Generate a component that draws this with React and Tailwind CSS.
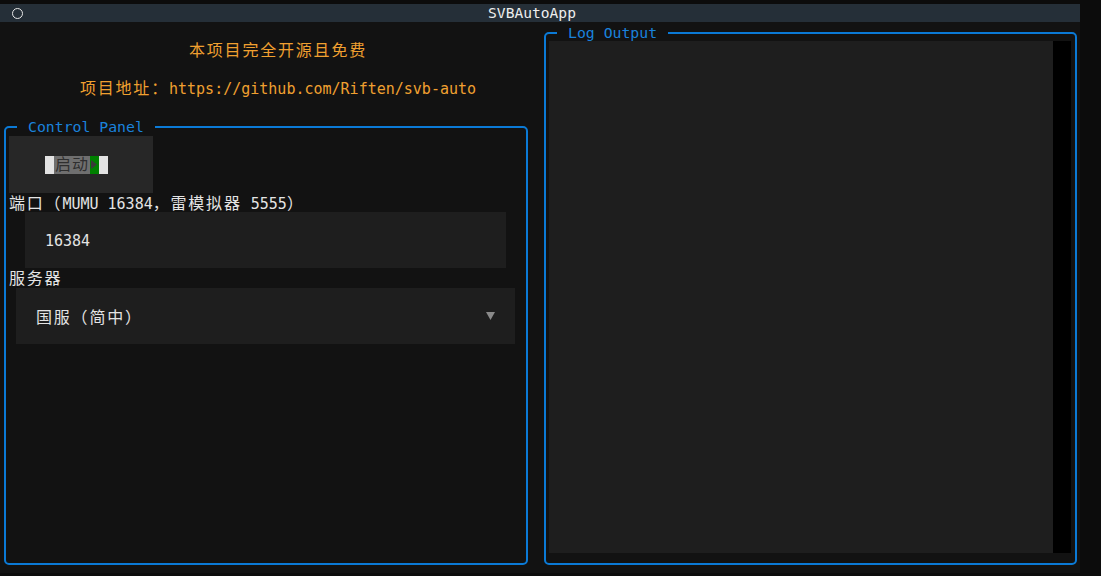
import React from 'react';

const Zh = ({ children, className = '' }) => (
    <span className={`text-[16px] tracking-[1.8px] ${className}`}>{children}</span>
);

function GroupBox({ title, className = '', children }) {
    return (
        <fieldset className={`border-2 border-[#0b7ad6] rounded-[5px] min-w-0 ${className}`}>
            <legend className="ml-[11px] px-[11px] text-[14.8px] leading-[16px] text-[#1a82dc]">{title}</legend>
            {children}
        </fieldset>
    );
}

export default function App() {
    return (
        <div
            className="h-[576px] w-[1101px] bg-[#0c0c0c] pt-[4px] overflow-hidden text-[15px] text-[#e4e4e4]"
            style={{ fontFamily: '"DejaVu Sans Mono", "Noto Sans CJK SC", monospace' }}
        >
            <div className="w-[1080px] h-[569px] flex flex-col bg-[#121212]">
                {/* title bar */}
                <div className="h-[18px] bg-[#252f38] flex items-center pl-[12px]">
                    <span className="w-[11px] h-[11px] rounded-full border-[1.5px] border-[#e8e8e8]" />
                    <div className="flex-1 text-center pr-[39px] leading-[18px] text-[14.6px] text-[#eeeeee]">SVBAutoApp</div>
                </div>

                <div className="flex flex-1 pb-[8px]">
                    {/* left column */}
                    <div className="w-[540px] flex flex-col">
                        <div className="pl-[16px] text-center text-[#f0a030] leading-[20px]">
                            <div className="mt-[19px]"><Zh>本项目完全开源且免费</Zh></div>
                            <div className="mt-[18px]"><Zh>项目地址：</Zh>https://github.com/Riften/svb-auto</div>
                        </div>

                        <GroupBox title="Control Panel" className="mt-[20px] ml-[4px] w-[524px] flex-1">
                            <div className="mt-[1px] ml-[3px] w-[144px] h-[57px] bg-[#272727] flex items-center pl-[36px]">
                                <div className="flex h-[18px]">
                                    <span className="w-[9px] bg-[#e3e3e3]" />
                                    <span className="w-[36px] bg-[#6f6f6f] text-[#2f2f2f] leading-[18px] text-[16px] text-center tracking-[1px]">启动</span>
                                    <span className="w-[9px] bg-[#008000] flex items-center">
                                        <svg width="7" height="9" viewBox="0 0 7 9" className="ml-[1px]">
                                            <polygon points="0,0 6,4.5 0,9" fill="#3a3a3a" />
                                        </svg>
                                    </span>
                                    <span className="w-[9px] bg-[#e3e3e3]" />
                                </div>
                            </div>

                            <div className="ml-[3px] h-[19px] pt-[2px] leading-[17px]">
                                <Zh>端口（</Zh>MUMU 16384<Zh>，雷模拟器</Zh> 5555<Zh>）</Zh>
                            </div>
                            <div className="ml-[19px] mr-[20px] h-[56px] bg-[#1e1e1e] flex items-center pl-[20px] pt-[3px]">
                                16384
                            </div>

                            <div className="ml-[3px] h-[20px] pt-[1px] leading-[19px]">
                                <Zh>服务器</Zh>
                            </div>
                            <div className="ml-[10px] mr-[11px] h-[56px] bg-[#1e1e1e] flex items-center pl-[20px] pr-[20px]">
                                <span className="flex-1 pt-[3px]"><Zh>国服（简中）</Zh></span>
                                <svg width="9" height="8" viewBox="0 0 9 8">
                                    <polygon points="0,0 9,0 4.5,8" fill="#8a8a8a" />
                                </svg>
                            </div>
                        </GroupBox>
                    </div>

                    {/* right column */}
                    <GroupBox title="Log Output" className="mt-[3px] ml-[4px] w-[533px] flex flex-col">
                        <div className="flex-1 flex pl-[3px] pr-[4px] pb-[10px]">
                            <div className="flex-1 bg-[#1e1e1e]" />
                            <div className="w-[18px] bg-black" />
                        </div>
                    </GroupBox>
                </div>
            </div>
        </div>
    );
}
